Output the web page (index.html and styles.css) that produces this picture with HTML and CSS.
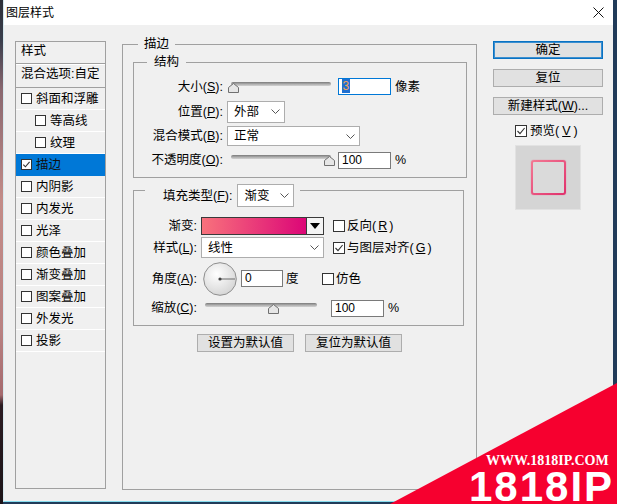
FILE: index.html
```html
<!DOCTYPE html>
<html lang="zh-CN">
<head>
<meta charset="utf-8">
<title>图层样式</title>
<link rel="stylesheet" href="styles.css">
</head>
<body>
<div class="window">
  <div class="titlebar">
    <span class="title">图层样式</span>
    <svg class="close" width="11" height="11" viewBox="0 0 11 11"><path d="M0.5 0.5L10.5 10.5M10.5 0.5L0.5 10.5" stroke="#111" stroke-width="1" fill="none"/></svg>
  </div>
  <div class="main">
    <div class="list">
      <div class="list-head">样式</div>
      <div class="list-blend">混合选项:自定</div>
      <div class="item"><span class="cb"></span>斜面和浮雕</div>
      <div class="item sub"><span class="cb"></span>等高线</div>
      <div class="item sub"><span class="cb"></span>纹理</div>
      <div class="item selected"><span class="cb"><svg width="9" height="9" viewBox="0 0 9 9"><polyline points="1.3,4.6 3.4,6.8 7.6,1.8" fill="none" stroke="#333" stroke-width="1.1"/></svg></span>描边</div>
      <div class="item"><span class="cb"></span>内阴影</div>
      <div class="item"><span class="cb"></span>内发光</div>
      <div class="item"><span class="cb"></span>光泽</div>
      <div class="item"><span class="cb"></span>颜色叠加</div>
      <div class="item"><span class="cb"></span>渐变叠加</div>
      <div class="item"><span class="cb"></span>图案叠加</div>
      <div class="item"><span class="cb"></span>外发光</div>
      <div class="item"><span class="cb"></span>投影</div>
    </div>

    <div class="group outer">
      <div class="legend">描边</div>

      <div class="group struct">
        <div class="legend">结构</div>
        <div class="form form-struct">
          <span class="lbl">大小(<u>S</u>):</span>
          <div class="ctrl">
            <div class="slider s100"><div class="track"></div><svg class="thumb" style="left:-3px" width="11" height="10" viewBox="0 0 11 10"><polygon points="5.5,0.5 10.5,4.5 10.5,9.5 0.5,9.5 0.5,4.5" fill="#e6e6e6" stroke="#707070"/></svg></div>
            <div class="input w53 focus"><span class="sel">3</span></div>
            <span class="unit">像素</span>
          </div>

          <span class="lbl">位置(<u>P</u>):</span>
          <div class="ctrl">
            <div class="select w58 h22"><span>外部</span><svg width="9" height="5" viewBox="0 0 9 5"><polyline points="0.5,0.5 4.5,4.5 8.5,0.5" fill="none" stroke="#555"/></svg></div>
          </div>

          <span class="lbl">混合模式(<u>B</u>):</span>
          <div class="ctrl">
            <div class="select w133 h20"><span>正常</span><svg width="9" height="5" viewBox="0 0 9 5"><polyline points="0.5,0.5 4.5,4.5 8.5,0.5" fill="none" stroke="#555"/></svg></div>
          </div>

          <span class="lbl">不透明度(<u>O</u>):</span>
          <div class="ctrl">
            <div class="slider s100"><div class="track"></div><svg class="thumb" style="left:93px" width="11" height="10" viewBox="0 0 11 10"><polygon points="5.5,0.5 10.5,4.5 10.5,9.5 0.5,9.5 0.5,4.5" fill="#e6e6e6" stroke="#707070"/></svg></div>
            <div class="input w53">100</div>
            <span class="unit">%</span>
          </div>
        </div>
      </div>

      <div class="group fill">
        <div class="legend legend-fill">
          <span>填充类型(<u>F</u>):</span>
          <div class="select w57 h23"><span>渐变</span><svg width="9" height="5" viewBox="0 0 9 5"><polyline points="0.5,0.5 4.5,4.5 8.5,0.5" fill="none" stroke="#555"/></svg></div>
        </div>
        <div class="form form-fill">
          <span class="lbl">渐变:</span>
          <div class="ctrl">
            <div class="grad"><div class="grad-sw"></div><div class="grad-arrow"><svg width="10" height="6" viewBox="0 0 10 6"><polygon points="0,0 10,0 5,6" fill="#000"/></svg></div></div>
            <label class="cbl m9"><span class="cb lg"></span>反向(<u>R</u>)</label>
          </div>

          <span class="lbl">样式(<u>L</u>):</span>
          <div class="ctrl">
            <div class="select w123 h21"><span>线性</span><svg width="9" height="5" viewBox="0 0 9 5"><polyline points="0.5,0.5 4.5,4.5 8.5,0.5" fill="none" stroke="#555"/></svg></div>
            <label class="cbl m9"><span class="cb lg"><svg width="10" height="10" viewBox="0 0 10 10"><polyline points="1.5,5 4,7.6 8.6,2" fill="none" stroke="#333" stroke-width="1.1"/></svg></span>与图层对齐(<u>G</u>)</label>
          </div>

          <span class="lbl">角度(<u>A</u>):</span>
          <div class="ctrl">
            <svg class="dial" width="34" height="34" viewBox="0 0 34 34">
              <defs><radialGradient id="dg" cx="40%" cy="35%" r="70%"><stop offset="0" stop-color="#ffffff"/><stop offset="1" stop-color="#d4d4d4"/></radialGradient></defs>
              <circle cx="17" cy="17" r="16.3" fill="url(#dg)" stroke="#8e8e8e"/>
              <line x1="17" y1="17" x2="32" y2="17" stroke="#6a6a6a" stroke-width="1"/>
              <circle cx="17" cy="17" r="1.6" fill="#444"/>
            </svg>
            <div class="input w42 m4">0</div>
            <span class="deg">度</span>
            <label class="cbl"><span class="cb lg"></span>仿色</label>
          </div>

          <span class="lbl">缩放(<u>C</u>):</span>
          <div class="ctrl">
            <div class="slider s112"><div class="track"></div><svg class="thumb" style="left:63px" width="11" height="10" viewBox="0 0 11 10"><polygon points="5.5,0.5 10.5,4.5 10.5,9.5 0.5,9.5 0.5,4.5" fill="#e6e6e6" stroke="#707070"/></svg></div>
            <div class="input w53 m14">100</div>
            <span class="unit">%</span>
          </div>
        </div>
      </div>

      <div class="defaults">
        <div class="btn w97">设置为默认值</div>
        <div class="btn w97">复位为默认值</div>
      </div>
    </div>

    <div class="side">
      <div class="btn default">确定</div>
      <div class="btn">复位</div>
      <div class="btn">新建样式(<u>W</u>)...</div>
      <label class="cbl preview-cb"><span class="cb lg"><svg width="10" height="10" viewBox="0 0 10 10"><polyline points="1.5,5 4,7.6 8.6,2" fill="none" stroke="#333" stroke-width="1.1"/></svg></span>预览(<u>V</u>)</label>
      <div class="preview"><div class="swatch"><div class="swatch-in"></div></div></div>
    </div>
  </div>
</div>

<div class="wm-tri"></div>
<div class="wm-url">WWW.1818IP.COM</div>
<div class="wm-big">1818IP</div>
</body>
</html>
```

FILE: styles.css
```css
* { box-sizing: border-box; }
html, body { margin: 0; padding: 0; }
body {
  width: 617px;
  height: 504px;
  overflow: hidden;
  position: relative;
  background:
    linear-gradient(to bottom, #2e3038 0, #3a3e4c 40px, #8a6870 90px, #c38c88 200px, #b98282 330px, #a56a6e 395px, #2c1c22 405px, #1c1418 504px) left top / 3px 100% no-repeat,
    #213b59;
  font-family: "Liberation Sans", "Noto Sans CJK SC", sans-serif;
  font-size: 12.5px;
  color: #000;
}
u { text-decoration: underline; text-underline-offset: 1px; }

.window {
  margin-left: 3px;
  width: 610px;
  height: 502px;
  border-left: 1px solid #d5e9ef;
  border-bottom: 1px solid #86dcee;
  display: flex;
  flex-direction: column;
}
.titlebar {
  height: 25px;
  flex: none;
  background: #fff;
  display: flex;
  align-items: center;
  justify-content: space-between;
  padding: 0 9px 0 2px;
}
.title { font-size: 12px; line-height: 16px; }
.close { display: block; }

.main {
  flex: 1;
  background: #f0f0f0;
  display: flex;
  align-items: flex-start;
  padding: 16px 10px 0 11px;
}

/* left list */
.list {
  flex: none;
  width: 91px;
  height: 448px;
  border: 1px solid #a0a0a0;
}
.list-head {
  height: 22px;
  line-height: 18px;
  padding-left: 5px;
  border-bottom: 1px solid #a0a0a0;
}
.list-blend {
  height: 24px;
  line-height: 19px;
  padding-left: 5px;
  border-top: 1px solid #fff;
  border-bottom: 1px solid #a0a0a0;
  white-space: nowrap;
}
.item {
  height: 22px;
  border-bottom: 1px solid #fff;
  display: flex;
  align-items: center;
  gap: 4px;
  padding-left: 5px;
  line-height: 16px;
  white-space: nowrap;
}
.item.sub { padding-left: 19px; }
.item.selected { background: #0078d7; border-bottom-color: #0078d7; color: #111; }

.cb {
  flex: none;
  width: 11px;
  height: 11px;
  border: 1px solid #333;
  background: #fff;
  display: inline-flex;
  align-items: center;
  justify-content: center;
}
.cb svg { display: block; }
.cb.lg { width: 12px; height: 12px; }
.cbl {
  display: flex;
  align-items: center;
  gap: 2px;
  white-space: nowrap;
  line-height: 16px;
}
.m9 { margin-left: 9px; }

/* group boxes */
.group { border: 1px solid #a0a0a0; }
.legend {
  width: max-content;
  height: 16px;
  line-height: 16px;
  margin-top: -9px;
  background: #f0f0f0;
  white-space: nowrap;
}
.outer {
  flex: none;
  width: 355px;
  height: 446px;
  margin: 3px 0 0 16px;
}
.outer > .legend { margin-left: 15px; padding: 0 6px; }
.struct { width: 334px; margin: 10px 0 0 10px; }
.struct > .legend { margin-left: 13px; padding: 0 7px; }
.fill { width: 331px; margin: 12px 0 0 10px; }
.legend-fill {
  height: 23px;
  margin-top: -7px;
  margin-left: 11px;
  padding: 0 6px 0 18px;
  display: flex;
  align-items: center;
  gap: 5px;
}

.form { display: grid; align-items: center; column-gap: 4px; }
.form-struct {
  grid-template-columns: 89px auto;
  grid-template-rows: 25px 25px 24px 24px;
  padding: 4px 0 5px;
}
.form-fill {
  grid-template-columns: 63px auto;
  grid-template-rows: 20px 23px 39px 20px;
  padding: 9px 0 7px;
}
.lbl { text-align: right; white-space: nowrap; line-height: 16px; }
.ctrl { display: flex; align-items: center; height: 100%; }

/* slider */
.slider { position: relative; height: 14px; flex: none; margin-left: 4px; }
.s100 { width: 100px; }
.s112 { width: 112px; }
.track {
  position: absolute;
  left: 0; right: 0; top: 2px;
  height: 4px;
  border-radius: 2px;
  background: linear-gradient(to bottom, #7a7a7a, #b4b4b4 60%, #d2d2d2);
}
.thumb { position: absolute; top: 3px; display: block; }

/* inputs */
.input {
  flex: none;
  height: 17px;
  background: #fff;
  border: 1px solid #7a7a7a;
  padding-left: 3px;
  font-size: 12px;
  line-height: 15px;
}
.input.focus { border-color: #0078d7; }
.sel { background: #1f6fd0; color: #f2a35a; padding: 0 0.5px; }
.w53 { width: 53px; margin-left: 7px; }
.w42 { width: 42px; }
.m4 { margin-left: 4px; }
.m14 { margin-left: 14px; }
.unit { margin-left: 4px; line-height: 16px; }
.deg { width: 36px; margin-left: 3px; line-height: 16px; flex: none; }

/* select */
.select {
  flex: none;
  display: flex;
  align-items: center;
  justify-content: space-between;
  background: #fff;
  border: 1px solid #adadad;
  padding: 0 4px 0 6px;
  line-height: 16px;
}
.select svg { display: block; }
.w58 { width: 58px; }
.w133 { width: 133px; }
.w57 { width: 57px; }
.w123 { width: 123px; }
.h20 { height: 20px; }
.h21 { height: 21px; }
.h22 { height: 22px; }
.h23 { height: 23px; }

/* gradient picker */
.grad {
  flex: none;
  width: 123px;
  height: 18px;
  border: 1px solid #3a3a3a;
  display: flex;
}
.grad-sw { flex: 1; background: linear-gradient(to right, #f8727c, #dc0677); }
.grad-arrow {
  width: 17px;
  border-left: 1px solid #3a3a3a;
  background: #f4f4f4;
  display: flex;
  align-items: center;
  justify-content: center;
}
.grad-arrow svg { display: block; }
.dial { display: block; flex: none; margin-left: 2px; }

/* buttons */
.btn {
  height: 18px;
  background: #e1e1e1;
  border: 1px solid #adadad;
  text-align: center;
  line-height: 16px;
  white-space: nowrap;
}
.btn.default { border-color: #0a72c2; box-shadow: inset 0 0 0 1px #3b8fd0; }
.w97 { width: 97px; flex: none; }
.defaults {
  display: flex;
  justify-content: center;
  gap: 11px;
  margin-top: 8px;
}

/* right column */
.side {
  flex: none;
  width: 110px;
  margin-left: 16px;
  display: flex;
  flex-direction: column;
}
.side .btn + .btn { margin-top: 10px; }
.preview-cb { margin: 10px 0 0 22px; height: 12px; gap: 3px; }
.preview {
  margin: 8px 0 0 22px;
  width: 66px;
  height: 65px;
  background: #d5d5d5;
  border: 1px solid #e2e2e2;
  display: flex;
  align-items: center;
  justify-content: center;
}
.swatch {
  width: 35px;
  height: 35px;
  padding: 2px;
  border-radius: 3px;
  background: linear-gradient(135deg, #f37a94, #e0306c);
  box-shadow: 0 0 1px #e8507a;
}
.swatch-in { width: 100%; height: 100%; border-radius: 1px; background: #dadada; }

/* watermark */
.wm-tri {
  position: absolute;
  left: 390px;
  top: 383px;
  width: 227px;
  height: 121px;
  background: #f6002f;
  clip-path: polygon(0 100%, 100% 0, 100% 100%);
}
.wm-url {
  position: absolute;
  left: 486px;
  top: 455px;
  color: #fff;
  font-family: "Liberation Serif", serif;
  font-weight: bold;
  font-size: 14px;
  line-height: 12px;
  white-space: nowrap;
}
.wm-big {
  position: absolute;
  left: 469px;
  top: 470px;
  color: #fff;
  font-family: "Liberation Sans", sans-serif;
  font-weight: bold;
  font-size: 42px;
  line-height: 34px;
  letter-spacing: 2px;
  white-space: nowrap;
}
```
